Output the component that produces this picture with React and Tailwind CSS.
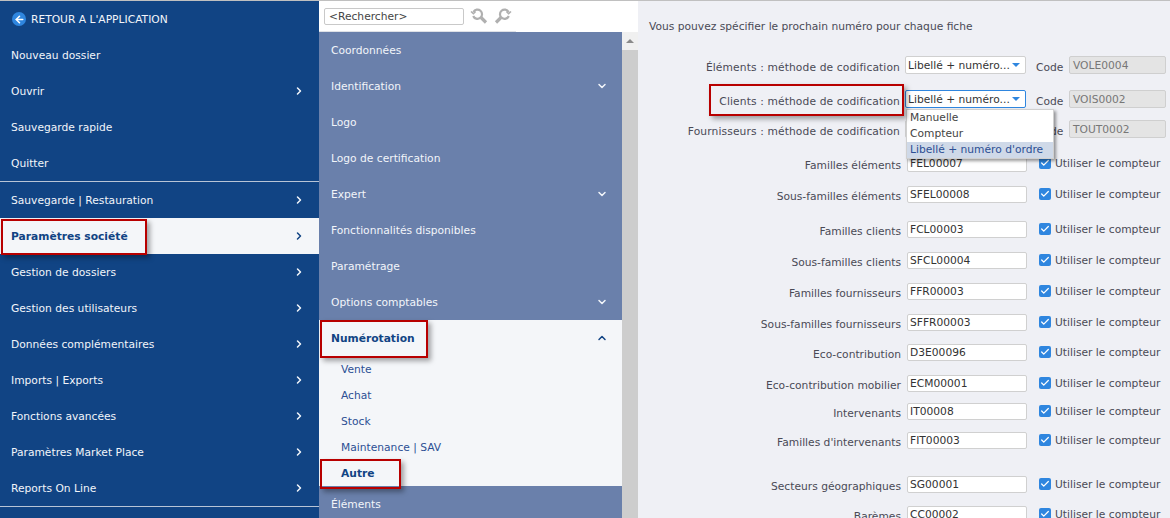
import React from 'react';
import { ChevronRight, ChevronDown, ChevronUp, ArrowLeft, Check } from 'lucide-react';

const leftTop = [
    { label: 'Nouveau dossier' },
    { label: 'Ouvrir', arrow: true },
    { label: 'Sauvegarde rapide' },
    { label: 'Quitter' },
];

const leftBottom = [
    { label: 'Sauvegarde | Restauration' },
    { label: 'Paramètres société', active: true },
    { label: 'Gestion de dossiers' },
    { label: 'Gestion des utilisateurs' },
    { label: 'Données complémentaires' },
    { label: 'Imports | Exports' },
    { label: 'Fonctions avancées' },
    { label: 'Paramètres Market Place' },
    { label: 'Reports On Line' },
];

const middleItems = [
    { label: 'Coordonnées' },
    { label: 'Identification', arrow: true },
    { label: 'Logo' },
    { label: 'Logo de certification' },
    { label: 'Expert', arrow: true },
    { label: 'Fonctionnalités disponibles' },
    { label: 'Paramétrage' },
    { label: 'Options comptables', arrow: true },
];

const subItems = ['Vente', 'Achat', 'Stock', 'Maintenance | SAV'];

const counterRows = [
    { label: 'Familles éléments', value: 'FEL00007', mt: 'mt-[14px]' },
    { label: 'Sous-familles éléments', value: 'SFEL00008', mt: 'mt-[11px]' },
    { label: 'Familles clients', value: 'FCL00003', mt: 'mt-[15px]' },
    { label: 'Sous-familles clients', value: 'SFCL00004', mt: 'mt-[11px]' },
    { label: 'Familles fournisseurs', value: 'FFR00003', mt: 'mt-[11px]' },
    { label: 'Sous-familles fournisseurs', value: 'SFFR00003', mt: 'mt-[11px]' },
    { label: 'Eco-contribution', value: 'D3E00096', mt: 'mt-[10px]' },
    { label: 'Eco-contribution mobilier', value: 'ECM00001', mt: 'mt-[11px]' },
    { label: 'Intervenants', value: 'IT00008', mt: 'mt-[8px]' },
    { label: "Familles d'intervenants", value: 'FIT00003', mt: 'mt-[9px]' },
    { label: 'Secteurs géographiques', value: 'SG00001', mt: 'mt-[24px]' },
    { label: 'Barèmes', value: 'CC00002', mt: 'mt-[10px]' },
];

const methodRows = [
    { label: 'Éléments : méthode de codification', code: 'VOLE0004', value: 'Libellé + numéro...', mt: 'mt-[21px]' },
    { label: 'Clients : méthode de codification', code: 'VOIS0002', value: 'Libellé + numéro...', mt: 'mt-[14px]', focus: true },
    { label: 'Fournisseurs : méthode de codification', code: 'TOUT0002', value: '', mt: 'mt-[10px]' },
];

const LeftItem = ({ item, arrow }) => (
    <div className={`h-9 shrink-0 flex items-center justify-between pl-[11px] pr-[14px] ${item.active ? 'bg-[#f4f6f9] text-[#114484] font-bold' : 'text-[#f2f5fa]'}`}>
        <span className="pt-[2px]">{item.label}</span>
        {arrow && <ChevronRight size={12} strokeWidth={3} />}
    </div>
);

const MiddleItem = ({ item }) => (
    <div className="h-9 shrink-0 flex items-center justify-between pl-[12px] pr-[14px] text-[#f2f5fa]">
        <span className="pt-[2px]">{item.label}</span>
        {item.arrow && <ChevronDown size={12} strokeWidth={3} />}
    </div>
);

const SearchIcon = ({ flip }) => (
    <svg width="18" height="18" viewBox="0 0 18 18" fill="none" stroke="#b0b0b0" className={flip ? '-scale-x-100' : ''}>
        <path d="M3.4 5A4.6 4.6 0 1 1 3.2 9" strokeWidth="2.2" />
        <path d="M11 10.5l5 5" strokeWidth="3.2" />
        <path d="M1 4.5l2.4 2.2L5.6 4.5" strokeWidth="1.6" />
    </svg>
);

const CheckBox = () => (
    <span className="w-[12px] h-[12px] rounded-[2px] bg-[#2f86df] flex items-center justify-center text-white">
        <Check size={10} strokeWidth={3} />
    </span>
);

const App = () => {
    return (
        <div className="relative w-[1170px] h-[518px] overflow-hidden border-t border-[#c0c0c0] flex text-[10.7px] font-['DejaVu_Sans',sans-serif]">
            {/* left menu */}
            <aside className="w-[319px] shrink-0 bg-[#114484] flex flex-col">
                <div className="h-9 shrink-0 flex items-center gap-[5px] pl-[12px] text-[#f2f5fa]">
                    <span className="w-[14px] h-[14px] rounded-full bg-[#2f86df] flex items-center justify-center text-white">
                        <ArrowLeft size={11} strokeWidth={3.5} />
                    </span>
                    <span className="pt-[2px]">RETOUR A L'APPLICATION</span>
                </div>
                {leftTop.map((item, index) => (
                    <LeftItem key={index} item={item} arrow={item.arrow} />
                ))}
                <div className="h-px shrink-0 bg-[#b8c4d6]" />
                {leftBottom.map((item, index) => (
                    <LeftItem key={index} item={item} arrow />
                ))}
                <div className="h-px shrink-0 bg-[#b8c4d6]" />
            </aside>

            {/* middle menu */}
            <section className="w-[319px] shrink-0 flex flex-col bg-white">
                <div className="h-[30px] shrink-0 flex items-center pl-[5px]">
                    <div className="w-[140px] h-[17px] border border-[#c9c9c9] rounded-[2px] flex items-center pl-[4px] pt-[2px] text-[#444]">&lt;Rechercher&gt;</div>
                    <span className="ml-[6px]"><SearchIcon /></span>
                    <span className="ml-[6px]"><SearchIcon flip /></span>
                </div>
                <div className="w-[197px] h-px shrink-0 bg-[#dfe1e6]" />
                <div className="flex flex-1 min-h-0">
                    <div className="w-[303px] bg-[#6a80ab] flex flex-col">
                        {middleItems.map((item, index) => (
                            <MiddleItem key={index} item={item} />
                        ))}
                        <div className="bg-[#f4f6f9] text-[#114484] shrink-0">
                            <div className="h-9 flex items-center justify-between pl-[12px] pr-[14px] font-bold">
                                <span className="pt-[2px]">Numérotation</span>
                                <ChevronUp size={12} strokeWidth={3} />
                            </div>
                            {subItems.map((sub, index) => (
                                <div key={index} className="h-[26px] flex items-center pl-[22px] pt-[2px] text-[#2c4f94]">{sub}</div>
                            ))}
                            <div className="h-[26px] flex items-center pl-[19px] pt-[2px] border-l-2 border-[#e8a800] ml-[1px] font-bold">Autre</div>
                        </div>
                        <MiddleItem item={{ label: 'Éléments' }} />
                    </div>
                    <div className="w-[16px] bg-[#cdcdcd] flex flex-col">
                        <div className="h-[18px] bg-[#f0f0f0] flex items-center justify-center">
                            <span className="w-0 h-0 border-x-[4px] border-x-transparent border-b-[4px] border-b-[#8a8a8a]" />
                        </div>
                    </div>
                </div>
            </section>

            {/* right form */}
            <main className="flex-1 bg-[#eff0f5] text-[#4a4a55] min-w-0">
                <div className="pl-[11px] pt-[19px] h-[33px] flex items-center whitespace-nowrap">Vous pouvez spécifier le prochain numéro pour chaque fiche</div>
                {methodRows.map((row, index) => (
                    <div key={index} className={`flex items-center h-[20px] whitespace-nowrap ${row.mt}`}>
                        <div className="w-[262px] text-right pt-[7px] tracking-[0.12px]">{row.label}</div>
                        <div className={`ml-[5px] w-[121px] h-[18px] bg-white rounded-[2px] border flex items-center justify-between pl-[2px] pr-[5px] ${row.focus ? 'border-[#2f86df]' : 'border-[#d0d0d0]'}`}>
                            <span className="text-[#333] pt-[2px]">{row.value}</span>
                            <span className="w-0 h-0 border-x-[4px] border-x-transparent border-t-[4px] border-t-[#2f86df]" />
                        </div>
                        <div className="ml-[10px] w-[33px] pt-[7px]">Code</div>
                        <div className="w-[97px] h-[18px] bg-[#e4e4e4] border border-[#cfcfcf] rounded-[2px] flex items-center pl-[3px] pt-[2px] text-[#777]">{row.code}</div>
                    </div>
                ))}
                {counterRows.map((row, index) => (
                    <div key={index} className={`flex items-center h-[20px] whitespace-nowrap ${row.mt}`}>
                        <div className="w-[263px] text-right pt-[6px]">{row.label}</div>
                        <div className="ml-[6px] w-[120px] h-[17px] bg-white rounded-[2px] border border-[#d0d0d0] flex items-center pl-[2px] pt-[2px] text-[#333]">{row.value}</div>
                        <div className="ml-[12px] flex items-center gap-[4px]">
                            <CheckBox />
                            <span className="pt-[2px]">Utiliser le compteur</span>
                        </div>
                    </div>
                ))}
            </main>

            {/* open dropdown */}
            <div className="absolute left-[906px] top-[108px] w-[148px] bg-white border border-[#d0d0d0] shadow-[2px_2px_3px_rgba(0,0,0,0.4)] text-[#444] flex flex-col whitespace-nowrap">
                <div className="h-[16px] flex items-center pl-[3px] pt-[1px]">Manuelle</div>
                <div className="h-[16px] flex items-center pl-[3px] pt-[1px]">Compteur</div>
                <div className="h-[16px] flex items-center pl-[3px] pt-[1px] bg-[#cfd9e8] text-[#2c4f94]">Libellé + numéro d'ordre</div>
            </div>

            {/* red annotation boxes */}
            <div className="absolute left-[1px] top-[218px] w-[146px] h-[36px] border-[2px] border-[#b80000] shadow-[3px_3px_5px_rgba(0,0,0,0.35)]" />
            <div className="absolute left-[320px] top-[319px] w-[108px] h-[38px] border-[2px] border-[#b80000] shadow-[3px_3px_5px_rgba(0,0,0,0.35)]" />
            <div className="absolute left-[320px] top-[458px] w-[81px] h-[30px] border-[2px] border-[#b80000] shadow-[3px_3px_5px_rgba(0,0,0,0.35)]" />
            <div className="absolute left-[709px] top-[83px] w-[195px] h-[32px] border-[2px] border-[#b80000] shadow-[3px_3px_5px_rgba(0,0,0,0.35)]" />
        </div>
    );
};

export default App;
